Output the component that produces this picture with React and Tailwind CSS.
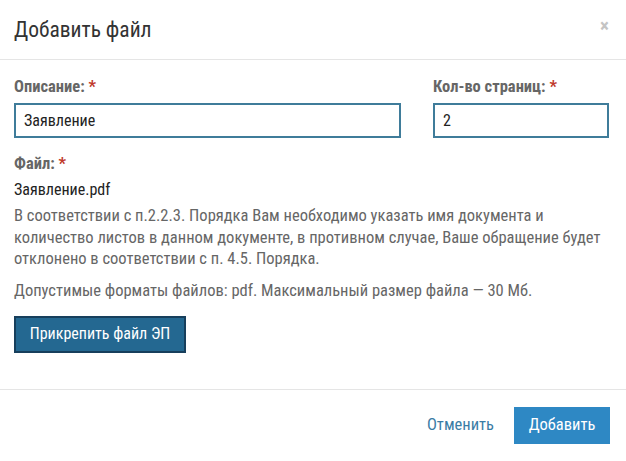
export default function App() {
  const font = { fontFamily: '"Liberation Sans Narrow", "Roboto Condensed", Roboto, sans-serif' };
  return (
    <div className="w-[626px] h-[461px] bg-white flex flex-col" style={font}>
      <div className="h-[60px] border-b border-[#e5e5e5] flex items-center justify-between pl-[14px] pr-[17px]">
        <div className="text-[21.5px] text-[#333] leading-none">Добавить файл</div>
        <div className="text-[#c4c4c4] text-[19px] leading-none font-bold self-start mt-[16px]">×</div>
      </div>
      <div className="flex-1 px-[14px] pt-[18px] border-b border-[#e5e5e5]">
        <div className="flex gap-[32px]">
          <div className="w-[387px] flex flex-col">
            <div className="text-[16.5px] font-bold text-[#666] leading-[18px]">Описание: <span className="text-[#c0392b]">*</span></div>
            <div className="mt-[7px] h-[35px] border-2 border-[#3f7c9a] flex items-center px-[8px] text-[16px] text-[#222]">Заявление</div>
          </div>
          <div className="w-[176px] flex flex-col">
            <div className="text-[16.5px] font-bold text-[#666] leading-[18px]">Кол-во страниц: <span className="text-[#c0392b]">*</span></div>
            <div className="mt-[7px] h-[35px] border-2 border-[#3f7c9a] flex items-center px-[8px] text-[16px] text-[#222]">2</div>
          </div>
        </div>
        <div className="mt-[17px] text-[16.5px] font-bold text-[#666] leading-[18px]">Файл: <span className="text-[#c0392b]">*</span></div>
        <div className="mt-[8px] text-[16px] text-[#222] leading-[18px]">Заявление.pdf</div>
        <div className="mt-[6px] text-[16.5px] text-[#666] leading-[21.5px] whitespace-nowrap">
          В соответствии с п.2.2.3. Порядка Вам необходимо указать имя документа и<br />
          количество листов в данном документе, в противном случае, Ваше обращение будет<br />
          отклонено в соответствии с п. 4.5. Порядка.
        </div>
        <div className="mt-[10px] text-[16.5px] text-[#666] leading-[21px]">Допустимые форматы файлов: pdf. Максимальный размер файла — 30 Мб.</div>
        <div className="mt-[15px] w-[172px] h-[37px] bg-[#246891] border-2 border-[#173f5c] text-white text-[16px] flex items-center justify-center">Прикрепить файл ЭП</div>
      </div>
      <div className="h-[71px] flex items-center justify-end pr-[16px] gap-[20px]">
        <div className="text-[16.5px] text-[#3a7ca5]">Отменить</div>
        <div className="w-[96px] h-[37px] bg-[#2e88c4] text-white text-[16.5px] flex items-center justify-center">Добавить</div>
      </div>
    </div>
  );
}
